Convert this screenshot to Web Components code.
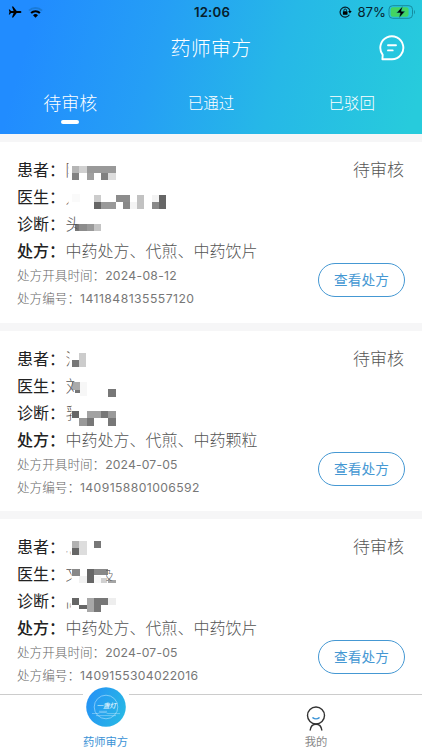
<!DOCTYPE html>
<html lang="zh-CN">
<head>
<meta charset="utf-8">
<meta name="viewport" content="width=device-width, initial-scale=1">
<title>药师审方</title>
<style>
	html, body {
		margin: 0;
		height: 100%;
		overflow: hidden;
	}
	body {
		font-family: Inter, "Noto Sans CJK SC", sans-serif;
		--blue: #4598d3;
	}
</style>
</head>
<body>
<app-x>
	<header-x slot="top" title="药师审方">
		<tab-x active>待审核</tab-x>
		<tab-x>已通过</tab-x>
		<tab-x>已驳回</tab-x>
	</header-x>
	<prescription-x status="待审核" kind="中药处方、代煎、中药饮片" date="2024-08-12" number="1411848135557120" date-spacing=".28" number-spacing=".46">
		<mask-x slot="patient" clip="3" blocks="6,10,7,7,b5 13,10,8,7,d0 21,10,29,7,999 6,17,7,7,82 21,17,7,7,a0 35,17,7,7,80 42,17,8,7,dd">陈</mask-x>
		<mask-x slot="doctor" clip="3" top="14" blocks="6,11,8,8,fa 28,12,7,7,cc 50,12,14,7,8c 71,12,7,14,c2 86,12,7,7,f3 93,12,7,14,66 28,19,7,7,66 35,19,15,7,99 57,19,7,7,88 64,19,7,7,f4 86,19,7,7,88">刘</mask-x>
		<mask-x slot="diagnosis" clip="12" blocks="9,14,5,7,777 13,14,8,7,8c 21,14,7,7,9a 28,14,7,7,c4">头</mask-x>
	</prescription-x>
	<prescription-x status="待审核" kind="中药处方、代煎、中药颗粒" date="2024-07-05" number="1409158801006592" date-spacing=".15" number-spacing=".4">
		<mask-x slot="patient" clip="4" blocks="6,15,7,7,77 13,8,7,14,cc">汪</mask-x>
		<mask-x slot="doctor" clip="9" blocks="6,10,8,8,aa 9,18,5,3,777 14,10,7,14,f7 42,17,8,8,77">刘</mask-x>
		<mask-x slot="diagnosis" clip="6" blocks="6,12,7,7,66 21,12,14,7,a2 35,12,7,7,77 42,12,8,7,99 13,19,8,8,99 21,19,7,8,77 42,19,8,8,77">乳</mask-x>
	</prescription-x>
	<prescription-x status="待审核" kind="中药处方、代煎、中药饮片" date="2024-07-05" number="1409155304022016" date-spacing=".15" number-spacing=".3">
		<mask-x slot="patient" clip="5" top="17" blocks="6,8,7,7,b2 13,8,8,14,dd 28,8,7,7,77 6,15,7,7,66">心</mask-x>
		<mask-x slot="doctor" clip="6" tail="及" blocks="6,9,8,7,88 21,9,7,14,66 28,9,14,6,88 13,16,8,7,f2 28,16,7,7,f8 35,18,6,5,d0 42,20,8,3,a5">文</mask-x>
		<mask-x slot="diagnosis" clip="5" top="14" blocks="6,11,7,7,66 21,11,7,14,a8 28,11,14,7,77 42,11,8,7,ee 13,18,8,4,66 28,18,7,7,77">高</mask-x>
	</prescription-x>
	<nav-x slot="bottom"></nav-x>
</app-x>

<script>
// app
window.customElements.define('app-x', class extends HTMLElement {
	constructor() {
		super();
		let shadowRoot = this.attachShadow({mode: 'open'});
		shadowRoot.innerHTML = `
<style>
	:host {
		display: flex;
		flex-direction: column;
		height: 100vh;
		overflow: hidden;
		background: #fff;
	}
	main {
		flex: 1 1 0;
		min-height: 0;
		overflow: hidden;
		display: flex;
		flex-direction: column;
		gap: 8px;
		padding-top: 8px;
		background: #f6f6f7;
	}
</style>
<slot name="top"></slot>
<main><slot></slot></main>
<slot name="bottom"></slot>
    `;
	}
});
// phone status bar
window.customElements.define('status-x', class extends HTMLElement {
	constructor() {
		super();
		let shadowRoot = this.attachShadow({mode: 'open'});
		shadowRoot.innerHTML = `
<style>
	:host {
		display: grid;
		grid-template-columns: 1fr auto 1fr;
		align-items: center;
		height: 24px;
		padding: 0 6px 0 8px;
		color: #06202c;
		font-size: 13.2px;
	}
	div {
		display: flex;
		align-items: center;
	}
	.left { gap: 6px; }
	.right { justify-content: flex-end; }
	b { font-weight: 600; letter-spacing: .2px; }
	span { margin: 0 2px 0 5px; }
	svg { display: block; }
</style>
<div class="left">
	<svg width="14" height="12" viewBox="0 0 14 12"><path d="M13.400 6c0-.7-.7-1-1.400-1H8.700L5.200.6H3.900L5.600 5H3L1.800 3.600H.8L1.500 6 .8 8.400h1L3 7h2.600L3.900 11.400h1.300L8.700 7H12c.7 0 1.400-.3 1.400-1z"/></svg>
	<svg width="15" height="12" viewBox="0 0 15 12"><g fill="none" stroke-width="2"><path d="M1 4.600a9.200 9.200 0 0 1 13 0" stroke="#1572c4" opacity=".65"/><path d="M3.100 7a6.200 6.200 0 0 1 8.800 0" stroke="#000"/></g><path d="M7.500 11.700 5 9.200a3.600 3.600 0 0 1 5 0z"/></svg>
</div>
<b>12:06</b>
<div class="right">
	<svg width="13" height="12" viewBox="0 0 13 12"><path d="M10.400 8.700A5 5 0 1 1 11 5" fill="none" stroke="#06202c" stroke-width="1.200"/><path d="M9.100 5h3.600L10.900 7.400z"/><rect x="3.900" y="5.300" width="4.600" height="3.400" rx=".5"/><path d="M4.900 5.500V4.300a1.300 1.300 0 0 1 2.600 0v1.200" fill="none" stroke="#06202c"/></svg>
	<span>87%</span>
	<svg width="28" height="14" viewBox="0 0 28 14"><rect x="1" y=".7" width="23.500" height="12.600" rx="3.600" fill="none" stroke="#168b9e"/><rect x="2.600" y="2.300" width="18" height="9.400" rx="2.200" fill="#43d463"/><path d="M26 5v4.200c1.300-.6 1.300-3.600 0-4.200z" fill="#168b9e"/><path d="M14.600 1.300 8.500 7.900h3.700l-1.100 5 6-6.700h-3.700z" stroke="#2bc0a8" stroke-width=".5"/></svg>
</div>
    `;
	}
});
// header
window.customElements.define('header-x', class extends HTMLElement {
	constructor() {
		super();
		let shadowRoot = this.attachShadow({mode: 'open'});
		shadowRoot.innerHTML = `
<style>
	:host {
		display: flex;
		flex-direction: column;
		flex: none;
		height: 134px;
		color: #fff;
		font-weight: 300;
		background: linear-gradient(105deg, #218cff 8%, #259ff5 37%, #26b8e7 65%, #27cbdc 97%);
	}
	status-x { font-weight: 400; }
	.title {
		display: grid;
		grid-template-columns: 1fr auto 1fr;
		align-items: center;
		height: 46px;
		padding: 0 17px;
	}
	h1 {
		margin: 0;
		font-size: 20px;
		font-weight: inherit;
		letter-spacing: .3px;
	}
	svg { justify-self: end; display: block; margin-top: 1px; }
	nav {
		display: grid;
		grid-template-columns: repeat(3, 1fr);
		height: 64px;
	}
</style>
<status-x></status-x>
<div class="title">
	<i></i>
	<h1>` + this.getAttribute('title') + `</h1>
	<svg width="27" height="26" viewBox="0 0 27 26" fill="none" stroke="#fff" stroke-width="1.900" stroke-linecap="round" stroke-linejoin="round"><path d="M4.400 24.300H14A11.500 11.500 0 1 0 4.700 19.800z"/><path d="M10 10.300h8M10 15.400h4.700"/></svg>
</div>
<nav><slot></slot></nav>
    `;
	}
});
// tab
window.customElements.define('tab-x', class extends HTMLElement {
	constructor() {
		super();
		let shadowRoot = this.attachShadow({mode: 'open'});
		shadowRoot.innerHTML = `
<style>
	:host {
		display: flex;
		flex-direction: column;
		align-items: center;
		font-size: 15.5px;
		line-height: 26px;
		padding-top: 21px;
	}
	:host([active]) {
		font-size: 18px;
	}
	:host([active])::after {
		content: "";
		width: 18px;
		height: 4px;
		margin-top: 3px;
		border-radius: 2px;
		background: #fff;
	}
</style>
<slot></slot>
    `;
	}
});
// masked value: the visible bit of the text, then gray squares
window.customElements.define('mask-x', class extends HTMLElement {
	constructor() {
		super();
		let shadowRoot = this.attachShadow({mode: 'open'});
		let rects = this.getAttribute('blocks').split(' ').map(block => {
			let [x, y, w, h, gray] = block.split(',');
			let color = gray.length === 2 ? gray + gray + gray : gray;
			return `<rect x="${x}" y="${y}" width="${w}" height="${h}" fill="#${color}"/>`;
		}).join('');
		let tail = this.hasAttribute('tail')
			? `<svg x="40" y="9" width="7" height="12"><text x="-5" y="11" font-size="13" fill="#666">${this.getAttribute('tail')}</text></svg>`
			: '';
		shadowRoot.innerHTML = `
<style>
	:host {
		display: grid;
		height: 27px;
	}
	span, svg.blocks { grid-area: 1 / 1; }
	span {
		line-height: 27px;
		clip-path: inset(` + (this.getAttribute('top') || 0) + `px 0 0 0);
		width: ` + this.getAttribute('clip') + `px;
		overflow: hidden;
		white-space: nowrap;
	}
	svg.blocks { display: block; margin-top: -1px; }
</style>
<span><slot></slot></span>
<svg class="blocks" width="110" height="27" shape-rendering="crispEdges">` + rects + tail + `</svg>
    `;
	}
});
// prescription card
window.customElements.define('prescription-x', class extends HTMLElement {
	constructor() {
		super();
		let shadowRoot = this.attachShadow({mode: 'open'});
		shadowRoot.innerHTML = `
<style>
	:host {
		display: flex;
		flex: none;
		justify-content: space-between;
		box-sizing: border-box;
		height: 180.7px;
		padding: 15px 17px 0;
		background: #fff;
		color: #555;
		font-weight: 300;
	}
	.row {
		display: flex;
		height: 27px;
		font-size: 16px;
		line-height: 27px;
		white-space: nowrap;
	}
	.row b {
		flex: none;
		width: 48.5px;
		font-weight: 400;
		color: #222;
	}
	.row.strong b { font-weight: 500; }
	.small {
		display: flex;
		height: 23px;
		font-size: 12.6px;
		line-height: 22px;
		color: #666;
		white-space: nowrap;
	}
	.small span { font-size: 12.2px; font-weight: 400; color: #777; }
	.date { letter-spacing: ` + this.getAttribute('date-spacing') + `px; }
	.number { letter-spacing: ` + this.getAttribute('number-spacing') + `px; }
	.side {
		display: flex;
		flex-direction: column;
		align-items: flex-end;
		justify-content: space-between;
		height: 140px;
	}
	.status { font-size: 17px; line-height: 27px; margin-right: 1px; }
	button {
		box-sizing: border-box;
		width: 87px;
		height: 34px;
		padding: 0;
		border: 1.400px solid var(--blue);
		border-radius: 17px;
		background: none;
		color: var(--blue);
		font: inherit;
		font-weight: 400;
		font-size: 13.7px;
		line-height: 30px;
	}
</style>
<div>
	<div class="row"><b>患者：</b><slot name="patient"></slot></div>
	<div class="row"><b>医生：</b><slot name="doctor"></slot></div>
	<div class="row"><b>诊断：</b><slot name="diagnosis"></slot></div>
	<div class="row strong"><b>处方：</b>` + this.getAttribute('kind') + `</div>
	<div class="small">处方开具时间：<span class="date">` + this.getAttribute('date') + `</span></div>
	<div class="small">处方编号：<span class="number">` + this.getAttribute('number') + `</span></div>
</div>
<div class="side">
	<div class="status">` + this.getAttribute('status') + `</div>
	<button>查看处方</button>
</div>
    `;
	}
});
// bottom navigation
window.customElements.define('nav-x', class extends HTMLElement {
	constructor() {
		super();
		let shadowRoot = this.attachShadow({mode: 'open'});
		shadowRoot.innerHTML = `
<style>
	:host {
		display: grid;
		grid-template-columns: 1fr 1fr;
		flex: none;
		box-sizing: border-box;
		height: 56px;
		border-top: 1px solid #ccc;
		background: #fff;
		font-size: 11.3px;
		line-height: 16px;
		color: #888;
	}
	a {
		display: flex;
		flex-direction: column;
		align-items: center;
		justify-content: flex-end;
		padding: 0 1px 1px 0;
	}
	.active { color: #3b93d6; padding-right: 0; }
	.logo { margin: -9px 0 6px; }
	.me { margin-bottom: 3px; }
	svg { display: block; flex: none; }
</style>
<a class="active">
	<svg class="logo" width="46" height="42" viewBox="0 0 46 42">
		<defs><linearGradient id="g" x1="0" y1=".3" x2="1" y2=".7"><stop stop-color="#2593f5"/><stop offset="1" stop-color="#28b8e5"/></linearGradient></defs>
		<path d="M0 0h46v12H0z" fill="#fff"/>
		<circle cx="23" cy="21" r="19.800" fill="url(#g)"/>
		<g fill="none" stroke="#c4eaff" stroke-width=".7"><circle cx="23" cy="21" r="11.800" opacity=".8"/><path d="M9 27.500h6l2-.9h6l2 1h12M13 29.600h20M16 25.300h8" opacity=".65"/></g>
		<text x="13.500" y="22" font-size="6.500" font-style="italic" font-weight="500" fill="#e8f8ff">一盏灯</text>
	</svg>
	药师审方
</a>
<a>
	<svg class="me" width="20" height="25" viewBox="0 0 20 25" fill="none" stroke="#333" stroke-width="1.400" stroke-linecap="round"><circle cx="10" cy="9.500" r="8.500"/><path d="M4.200 24c.5-3.600 3-5.800 5.800-5.800s5.300 2.200 5.800 5.800"/><path d="M7 11.800c1.600 1.300 4.400 1.300 6 0" stroke="#3b93d6" stroke-width="1.500"/></svg>
	我的
</a>
    `;
	}
});
</script>
</body>
</html>
